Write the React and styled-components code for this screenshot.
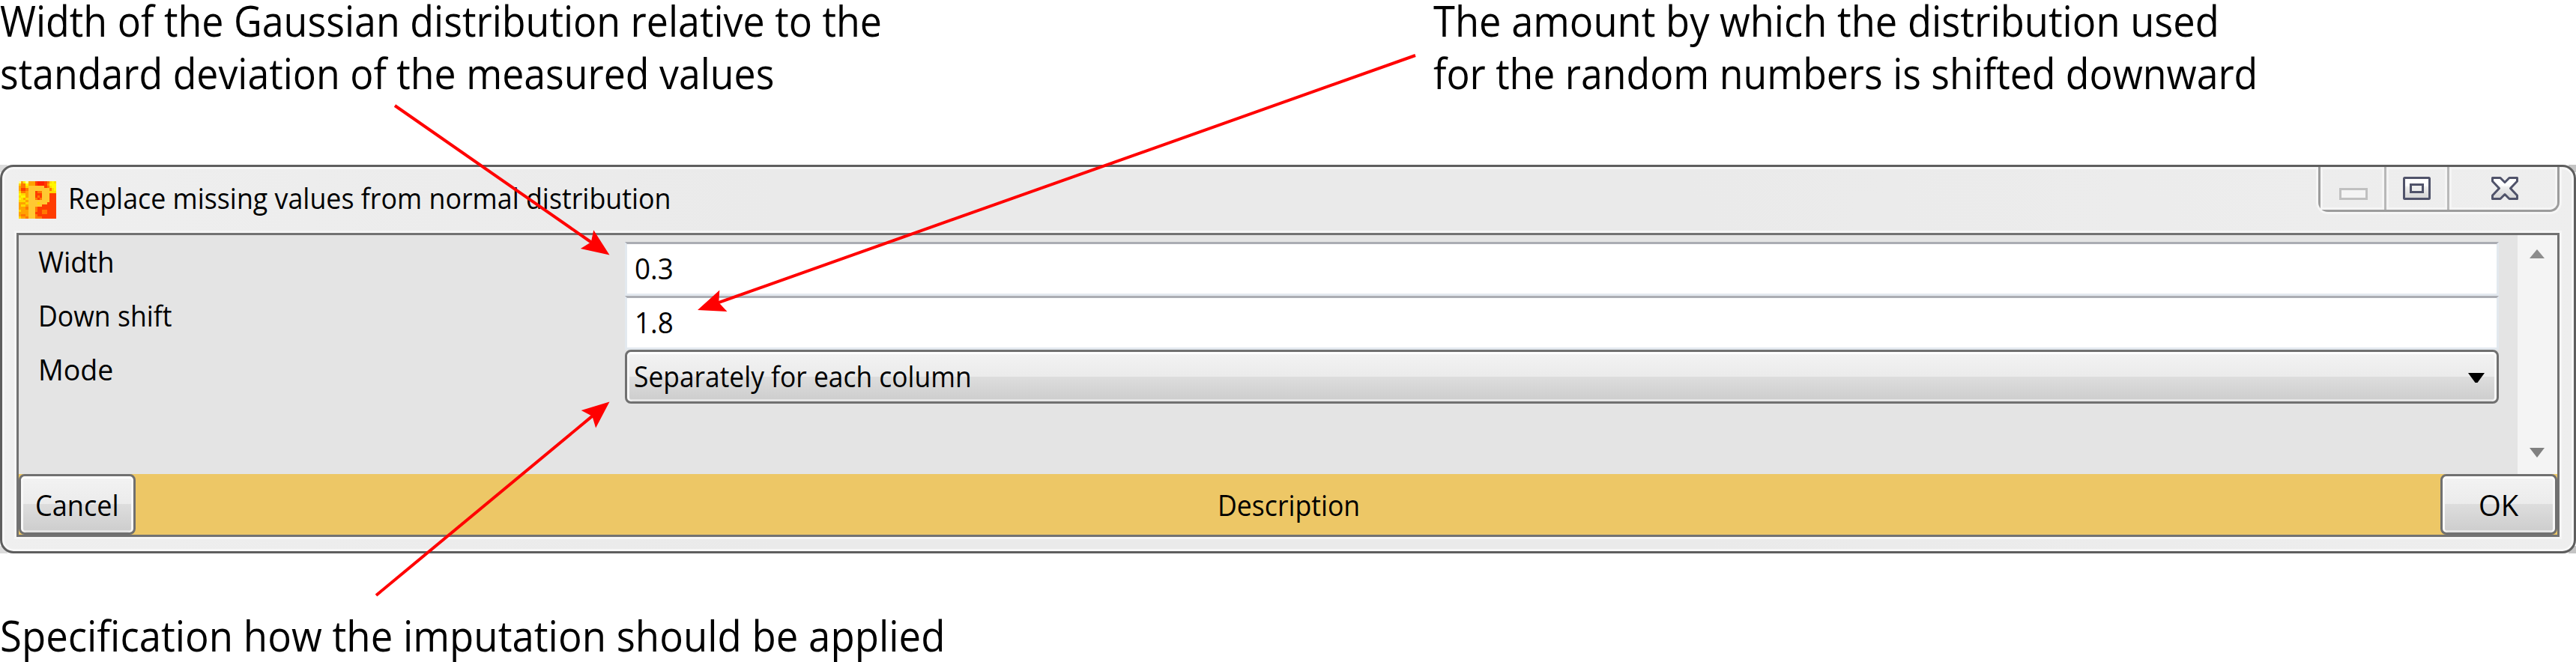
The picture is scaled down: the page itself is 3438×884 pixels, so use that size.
import React, { useLayoutEffect, useRef, useState } from "react";
import styled, { createGlobalStyle, css } from "styled-components";

const GlobalStyle = createGlobalStyle`
  * { box-sizing: border-box; }
  body { margin: 0; background: #fff; overflow: hidden; }
`;

const Figure = styled.main`
  position: relative;
  width: 3438px;
  height: 884px;
  color: #000;
  background: #fff;
  font-family: "Open Sans", "Noto Sans", sans-serif;
`;

/* Text set to a fixed measure; the glyphs are condensed to fill it. */
const Measure = styled.span`
  display: block;
  flex: none;
  width: ${(p) => p.$width}px;
  height: ${(p) => p.$line}px;
  line-height: ${(p) => p.$line}px;
  font-size: ${(p) => p.$size}px;
  white-space: nowrap;
`;

const Condensed = styled.span`
  display: inline-block;
  transform-origin: 0 50%;
`;

function Fit({ width, size = 39, line = 72, children }) {
  const ref = useRef(null);
  const [scale, setScale] = useState(1);
  useLayoutEffect(() => {
    setScale(width / ref.current.offsetWidth);
  }, [width, size, children]);
  return (
    <Measure $width={width} $size={size} $line={line}>
      <Condensed ref={ref} style={{ transform: `scaleX(${scale})` }}>
        {children}
      </Condensed>
    </Measure>
  );
}

const NotesRow = styled.section`
  display: flex;
  height: ${(p) => p.$height}px;
  padding-top: ${(p) => p.$top || 0}px;
`;

const Note = styled.div`
  display: flex;
  flex-direction: column;
  gap: 16px;
  width: ${(p) => p.$width}px;
`;

const Backdrop = styled.div`
  height: 519px;
  background:
    linear-gradient(#dcdcdc, #dcdcdc) 0 0 / 10px 10px no-repeat,
    linear-gradient(#c4c4c4, #c4c4c4) 100% 0 / 10px 10px no-repeat,
    linear-gradient(#dcdcdc, #dcdcdc) 0 100% / 10px 10px no-repeat,
    linear-gradient(#c4c4c4, #c4c4c4) 100% 100% / 10px 10px no-repeat;
`;

const Window = styled.section`
  display: flex;
  flex-direction: column;
  height: 519px;
  padding: 0 19px 19px;
  border: 3px solid #5e5e5e;
  border-radius: 18px;
  box-shadow: inset 0 0 0 3px #f7f7f7;
  background: linear-gradient(90deg, #efefef, #eaeaea 30%, #eaeaea 65%, #eeeeee);
`;

const TitleBar = styled.header`
  display: flex;
  height: 88px;
  padding-left: 3px;
`;

const TitleText = styled.div`
  flex: 1;
  padding: 5px 0 0 16px;
`;

const AppMark = styled.svg`
  flex: none;
  width: 50px;
  height: 50px;
  margin-top: 19px;
`;

const Controls = styled.div`
  display: flex;
  width: 322px;
  height: 60px;
  border: 3px solid #9c9c9c;
  border-top: 0;
  border-radius: 0 0 13px 13px;
  box-shadow: 0 0 0 3px #f6f6f6;
  clip-path: inset(0 -3px -3px -3px);
`;

const ControlCell = styled.div`
  width: ${(p) => p.$width}px;
  border-right: ${(p) => (p.$last ? 0 : 3)}px solid #b8b8b8;
  border-radius: ${(p) => (p.$last ? "0 0 10px 0" : "0")};
  box-shadow: inset 0 0 0 3px #f5f5f5;
  svg { display: block; margin: ${(p) => p.$offset}; }
`;

const Panel = styled.div`
  display: flex;
  flex-direction: column;
  height: 406px;
  border: 3px solid #727272;
  box-shadow: 0 0 0 3px #f6f6f6;
  background: #e4e4e4;
`;

const Body = styled.div`
  display: flex;
  height: 319px;
`;

const Form = styled.div`
  display: flex;
  flex-direction: column;
  width: 3310px;
  padding: 9px 0 0 24px;
`;

const FormRow = styled.div`
  display: flex;
  height: 72px;
`;

const FieldLabel = styled.div`
  width: 785px;
  margin-top: -10px;
  padding-left: 2px;
`;

const TextField = styled.div`
  width: 2501px;
  height: 72px;
  padding-left: 10px;
  border: 3px solid #e3e9ef;
  border-top-color: #abadb3;
  background: #fff;
`;

const buttonFace = css`
  border: 3px solid #707070;
  border-radius: 8px;
  background: linear-gradient(#f3f3f3, #ebebeb 49.9%, #dddddd 50%, #cdcdcd);
  box-shadow: inset 0 3px 0 #fff, inset 3px 0 0 #f8f8f8, inset -3px 0 0 #f8f8f8, inset 0 -3px 0 #e4e4e4;
`;

const Select = styled.div`
  ${buttonFace}
  display: flex;
  justify-content: space-between;
  width: 2501px;
  height: 72px;
  padding-left: 9px;
  svg { margin: 28px 16px 0 0; }
`;

const ScrollTrack = styled.div`
  display: flex;
  flex-direction: column;
  justify-content: space-between;
  align-items: center;
  width: 53px;
  margin-left: auto;
  padding: 19px 2px 22px 0;
  background: #f4f4f4;
`;

const Footer = styled.footer`
  display: flex;
  justify-content: space-between;
  height: 81px;
  background: #edc766;
`;

const Button = styled.button`
  ${buttonFace}
  display: flex;
  width: 156px;
  height: 81px;
  padding: 0 0 0 ${(p) => p.$indent}px;
  color: inherit;
  font-family: inherit;
  text-align: left;
`;

const Caption = styled.div`
  flex: 1;
  padding: 3px 0 0 1444px;
`;

const Arrows = styled.svg`
  position: absolute;
  inset: 0;
  pointer-events: none;
`;

const markColors = {
  P: "#ffc832", R: "#ff3c00", r: "#ff2000", O: "#ff7800",
  o: "#ffa200", y: "#ffd800", Y: "#fff700", w: "#ffff90",
};

const markRows = [
  "woYwoooRrrrROyYy",
  "yOOYoooRrrrRoYYY",
  "oOOyPPPPPPPROyYY",
  "oRROPPPPPPPPPOyY",
  "yOOoPPPROOPPPyyy",
  "YyyoPPPRRRPPPRRR",
  "yYYoPPPRORPPPRRR",
  "YyoyPPPOROPPPRRR",
  "yyyoPPPPPPPPPRRR",
  "oooyPPPPyPPPRRRR",
  "oyyoPPPPPPRRRRRR",
  "oooOPPPORRRRRRRR",
  "yoooPPPORROORRRR",
  "ooooPPPRRROORRRR",
  "oOOoPPPORRRRRRRR",
  "yooOPPPOOORRRRRR",
];

function Mark() {
  return (
    <AppMark viewBox="0 0 16 16" shapeRendering="crispEdges">
      {markRows.map((row, y) =>
        [...row].map((c, x) => (
          <rect key={`${x}-${y}`} x={x} y={y} width="1" height="1" fill={markColors[c]} />
        ))
      )}
    </AppMark>
  );
}

function Arrow({ from, to }) {
  const dx = to[0] - from[0];
  const dy = to[1] - from[1];
  const length = Math.hypot(dx, dy);
  const angle = (Math.atan2(dy, dx) * 180) / Math.PI;
  return (
    <g transform={`translate(${to[0]} ${to[1]}) rotate(${angle})`} fill="#f00">
      <rect x={-length} y="-2" width={length - 28} height="4" />
      <path d="M0 0 L-36.5 -15.2 L-30 0 L-36.5 15.2Z" />
    </g>
  );
}

export default function App() {
  return (
    <Figure>
      <GlobalStyle />
      <NotesRow $height={220}>
        <Note $width={1913}>
          <Fit width={1177} size={56} line={54}>Width of the Gaussian distribution relative to the</Fit>
          <Fit width={1033} size={56} line={54}>standard deviation of the measured values</Fit>
        </Note>
        <Note $width={1200}>
          <Fit width={1049} size={56} line={54}>The amount by which the distribution used</Fit>
          <Fit width={1100} size={56} line={54}>for the random numbers is shifted downward</Fit>
        </Note>
      </NotesRow>

      <Backdrop>
        <Window>
          <TitleBar>
            <Mark />
            <TitleText>
              <Fit width={805}>Replace missing values from normal distribution</Fit>
            </TitleText>
            <Controls>
              <ControlCell $width={88} $offset="28px 0 0 25px">
                <svg width="38" height="16">
                  <rect x="1.5" y="1.5" width="35" height="13" fill="#f4f4f4" stroke="#c0c0c0" strokeWidth="3" />
                </svg>
              </ControlCell>
              <ControlCell $width={84} $offset="13px 0 0 22px">
                <svg width="37" height="31">
                  <defs>
                    <linearGradient id="glyph" x2="0" y2="1">
                      <stop offset="0.35" stopColor="#fff" />
                      <stop offset="0.45" stopColor="#eee" />
                      <stop offset="1" stopColor="#d4d4d4" />
                    </linearGradient>
                  </defs>
                  <rect x="1.5" y="1.5" width="34" height="28" rx="1" fill="url(#glyph)" stroke="#50536a" strokeWidth="3" />
                  <rect x="10.5" y="10.5" width="16" height="10" fill="#eee" stroke="#50536a" strokeWidth="3" />
                </svg>
              </ControlCell>
              <ControlCell $width={144} $last $offset="13px 0 0 56px">
                <svg width="36" height="31">
                  <path
                    d="M1.5 1.5H12L18 7.5L24 1.5H34.5V6L25.5 15.5L34.5 25V29.5H24L18 23.5L12 29.5H1.5V25L10.5 15.5L1.5 6Z"
                    fill="url(#glyph)" stroke="#50536a" strokeWidth="3" strokeLinejoin="round"
                  />
                </svg>
              </ControlCell>
            </Controls>
          </TitleBar>

          <Panel>
            <Body>
              <Form>
                <FormRow>
                  <FieldLabel><Fit width={102}>Width</Fit></FieldLabel>
                  <TextField><Fit width={52} line={64}>0.3</Fit></TextField>
                </FormRow>
                <FormRow>
                  <FieldLabel><Fit width={178}>Down shift</Fit></FieldLabel>
                  <TextField><Fit width={52} line={64}>1.8</Fit></TextField>
                </FormRow>
                <FormRow>
                  <FieldLabel><Fit width={100}>Mode</Fit></FieldLabel>
                  <Select>
                    <Fit width={451} line={64}>Separately for each column</Fit>
                    <svg width="22" height="13"><path d="M0 0H22L12.5 13H9.5Z" /></svg>
                  </Select>
                </FormRow>
              </Form>
              <ScrollTrack>
                <svg width="20" height="12"><path d="M0 12L10 0L20 12Z" fill="#8c8c8c" /></svg>
                <svg width="20" height="13"><path d="M0 0H20L10 13Z" fill="#808080" /></svg>
              </ScrollTrack>
            </Body>
            <Footer>
              <Button $indent={19}><Fit width={112} line={76}>Cancel</Fit></Button>
              <Caption><Fit width={190} line={76}>Description</Fit></Caption>
              <Button $indent={48}><Fit width={53} line={76}>OK</Fit></Button>
            </Footer>
          </Panel>
        </Window>
      </Backdrop>

      <NotesRow $height={145} $top={82}>
        <Note $width={1300}>
          <Fit width={1261} size={56} line={54}>Specification how the imputation should be applied</Fit>
        </Note>
      </NotesRow>

      <Arrows width="3438" height="884">
        <Arrow from={[527, 141]} to={[813.5, 340.5]} />
        <Arrow from={[1889, 74]} to={[931, 414]} />
        <Arrow from={[502, 795]} to={[813.5, 536.5]} />
      </Arrows>
    </Figure>
  );
}
